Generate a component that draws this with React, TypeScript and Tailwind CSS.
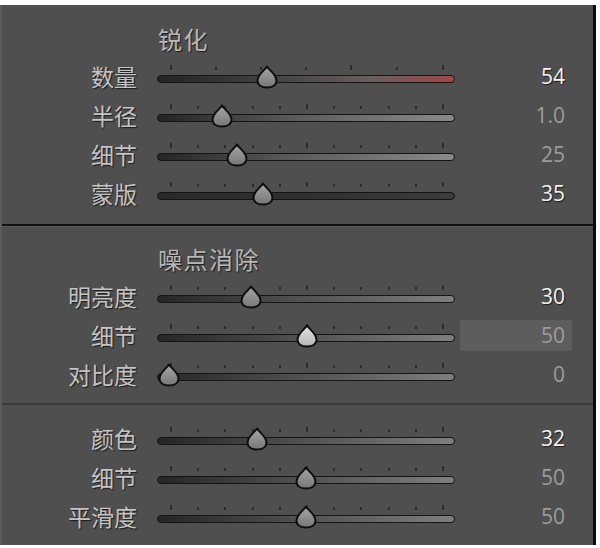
import React from "react";

type Row = {
  label: string;
  value: string;
  bright?: boolean;
  thumb: number;
  track: string;
  ticks: "seven" | "eleven";
  active?: boolean;
};

const sharpen: Row[] = [
  { label: "数量", value: "54", bright: true, thumb: 110, ticks: "seven", track: "bg-[linear-gradient(to_right,#242424,#444444_40%,#6a5e5e_72%,#a04848)]" },
  { label: "半径", value: "1.0", thumb: 65, ticks: "eleven", track: "bg-[linear-gradient(to_right,#242424,#5a5a5a_45%,#8a8a8a)]" },
  { label: "细节", value: "25", thumb: 80, ticks: "eleven", track: "bg-[linear-gradient(to_right,#242424,#5a5a5a_45%,#8a8a8a)]" },
  { label: "蒙版", value: "35", bright: true, thumb: 106, ticks: "eleven", track: "bg-[linear-gradient(to_right,#2a2a2a,#303030_50%,#3c3c3c)]" },
];

const noise: Row[] = [
  { label: "明亮度", value: "30", bright: true, thumb: 94, ticks: "eleven", track: "bg-[linear-gradient(to_right,#262626,#4e4e4e_45%,#7e7e7e)]" },
  { label: "细节", value: "50", thumb: 150, ticks: "eleven", active: true, track: "bg-[linear-gradient(to_right,#262626,#4e4e4e_45%,#7e7e7e)]" },
  { label: "对比度", value: "0", thumb: 12, ticks: "eleven", track: "bg-[linear-gradient(to_right,#262626,#4e4e4e_45%,#7e7e7e)]" },
];

const color: Row[] = [
  { label: "颜色", value: "32", bright: true, thumb: 100, ticks: "eleven", track: "bg-[linear-gradient(to_right,#262626,#4e4e4e_45%,#7e7e7e)]" },
  { label: "细节", value: "50", thumb: 149, ticks: "eleven", track: "bg-[linear-gradient(to_right,#262626,#4e4e4e_45%,#7e7e7e)]" },
  { label: "平滑度", value: "50", thumb: 149, ticks: "eleven", track: "bg-[linear-gradient(to_right,#262626,#4e4e4e_45%,#7e7e7e)]" },
];

const sevenTicks = [13, 58, 103, 148, 193, 239, 285];
const elevenTicks = [13, 40, 67, 95, 122, 149, 176, 203, 231, 258, 285];

function Thumb({ active }: { active?: boolean }) {
  const id = active ? "thumbActive" : "thumbIdle";
  return (
    <svg width="24" height="24" viewBox="0 0 24 24">
      <defs>
        <linearGradient id={id} x1="0" y1="0" x2="0" y2="1">
          <stop offset="0" stopColor={active ? "#e4e4e4" : "#a6a6a6"} />
          <stop offset="1" stopColor={active ? "#b4b4b4" : "#767676"} />
        </linearGradient>
      </defs>
      <path
        d="M12 1.5 C13.5 4.5 21.5 9.5 21.5 15.5 C21.5 20 17.5 22.5 12 22.5 C6.5 22.5 2.5 20 2.5 15.5 C2.5 9.5 10.5 4.5 12 1.5 Z"
        fill={`url(#${id})`}
        stroke="#0e0e0e"
        strokeWidth="2"
        strokeLinejoin="round"
      />
    </svg>
  );
}

function Slider({ row }: { row: Row }) {
  const ticks = row.ticks === "seven" ? sevenTicks : elevenTicks;
  const tall = row.ticks === "seven" ? [0, 4, 6] : [0, 5, 10];
  return (
    <div className="relative h-full w-[298px]">
      {ticks.map((x, i) => (
        <div
          key={i}
          className={
            tall.includes(i)
              ? "absolute top-[8px] h-[5px] w-[1.5px] bg-[#2c2c2c]"
              : "absolute top-[10px] h-[3px] w-[1.5px] bg-[#2c2c2c]"
          }
          style={{ left: x }}
        />
      ))}
      <div className={`absolute left-0 right-0 top-[18px] h-[8px] rounded-full border-[1.5px] border-[#141414] ${row.track}`} />
      <div className="absolute top-[8px]" style={{ left: row.thumb - 12 }}>
        <Thumb active={row.active} />
      </div>
    </div>
  );
}

function SliderRow({ row }: { row: Row }) {
  return (
    <div className="flex h-[39px] items-center">
      <div className="w-[135px] text-right text-[23px] leading-none text-[#c4c4c4] [text-shadow:1px_1px_1px_#1c1c1c]">
        {row.label}
      </div>
      <div className="ml-[20px] h-full">
        <Slider row={row} />
      </div>
      <div
        className={
          row.active
            ? "ml-[5px] flex h-[31px] w-[112px] items-center justify-end bg-[#5d5d5d] pr-[7px]"
            : "ml-[5px] flex h-[31px] w-[112px] items-center justify-end pr-[7px]"
        }
      >
        <span
          className={
            row.bright
              ? "font-['Open_Sans',sans-serif] text-[21px] leading-none text-[#f2f2f2] [text-shadow:1px_1px_1px_#1c1c1c]"
              : "font-['Open_Sans',sans-serif] text-[21px] leading-none text-[#9c9c9c]"
          }
        >
          {row.value}
        </span>
      </div>
    </div>
  );
}

function Title({ text }: { text: string }) {
  return (
    <div className="flex h-[37px] items-center pl-[156px] text-[24px] leading-none tracking-[1.5px] text-[#b8b8b8] [text-shadow:1px_1px_1px_#1c1c1c]">
      {text}
    </div>
  );
}

export default function App() {
  return (
    <div className="h-[548px] w-[600px] bg-white pt-[5px] font-['Noto_Sans_CJK_SC','Noto_Sans',sans-serif]">
      <div className="flex h-[540px] w-[596px] flex-col border-l-[2px] border-r-[3px] border-l-[#5a5a5a] border-r-[#0c0c0c] bg-[#4f4f4f]">
        <div className="h-[219px] pt-[15px]">
          <Title text="锐化" />
          {sharpen.map((r) => (
            <SliderRow key={r.label} row={r} />
          ))}
        </div>
        <div className="h-[2px] bg-[#111111]" />
        <div className="h-[1px] bg-[#5c5c5c]" />
        <div className="h-[176px] pt-[13px]">
          <Title text="噪点消除" />
          {noise.map((r) => (
            <SliderRow key={r.label + r.value + "n"} row={r} />
          ))}
        </div>
        <div className="h-[2px] bg-[#3b3b3b]" />
        <div className="flex-1 pt-[14px]">
          {color.map((r, i) => (
            <SliderRow key={r.label + i} row={r} />
          ))}
        </div>
      </div>
    </div>
  );
}
